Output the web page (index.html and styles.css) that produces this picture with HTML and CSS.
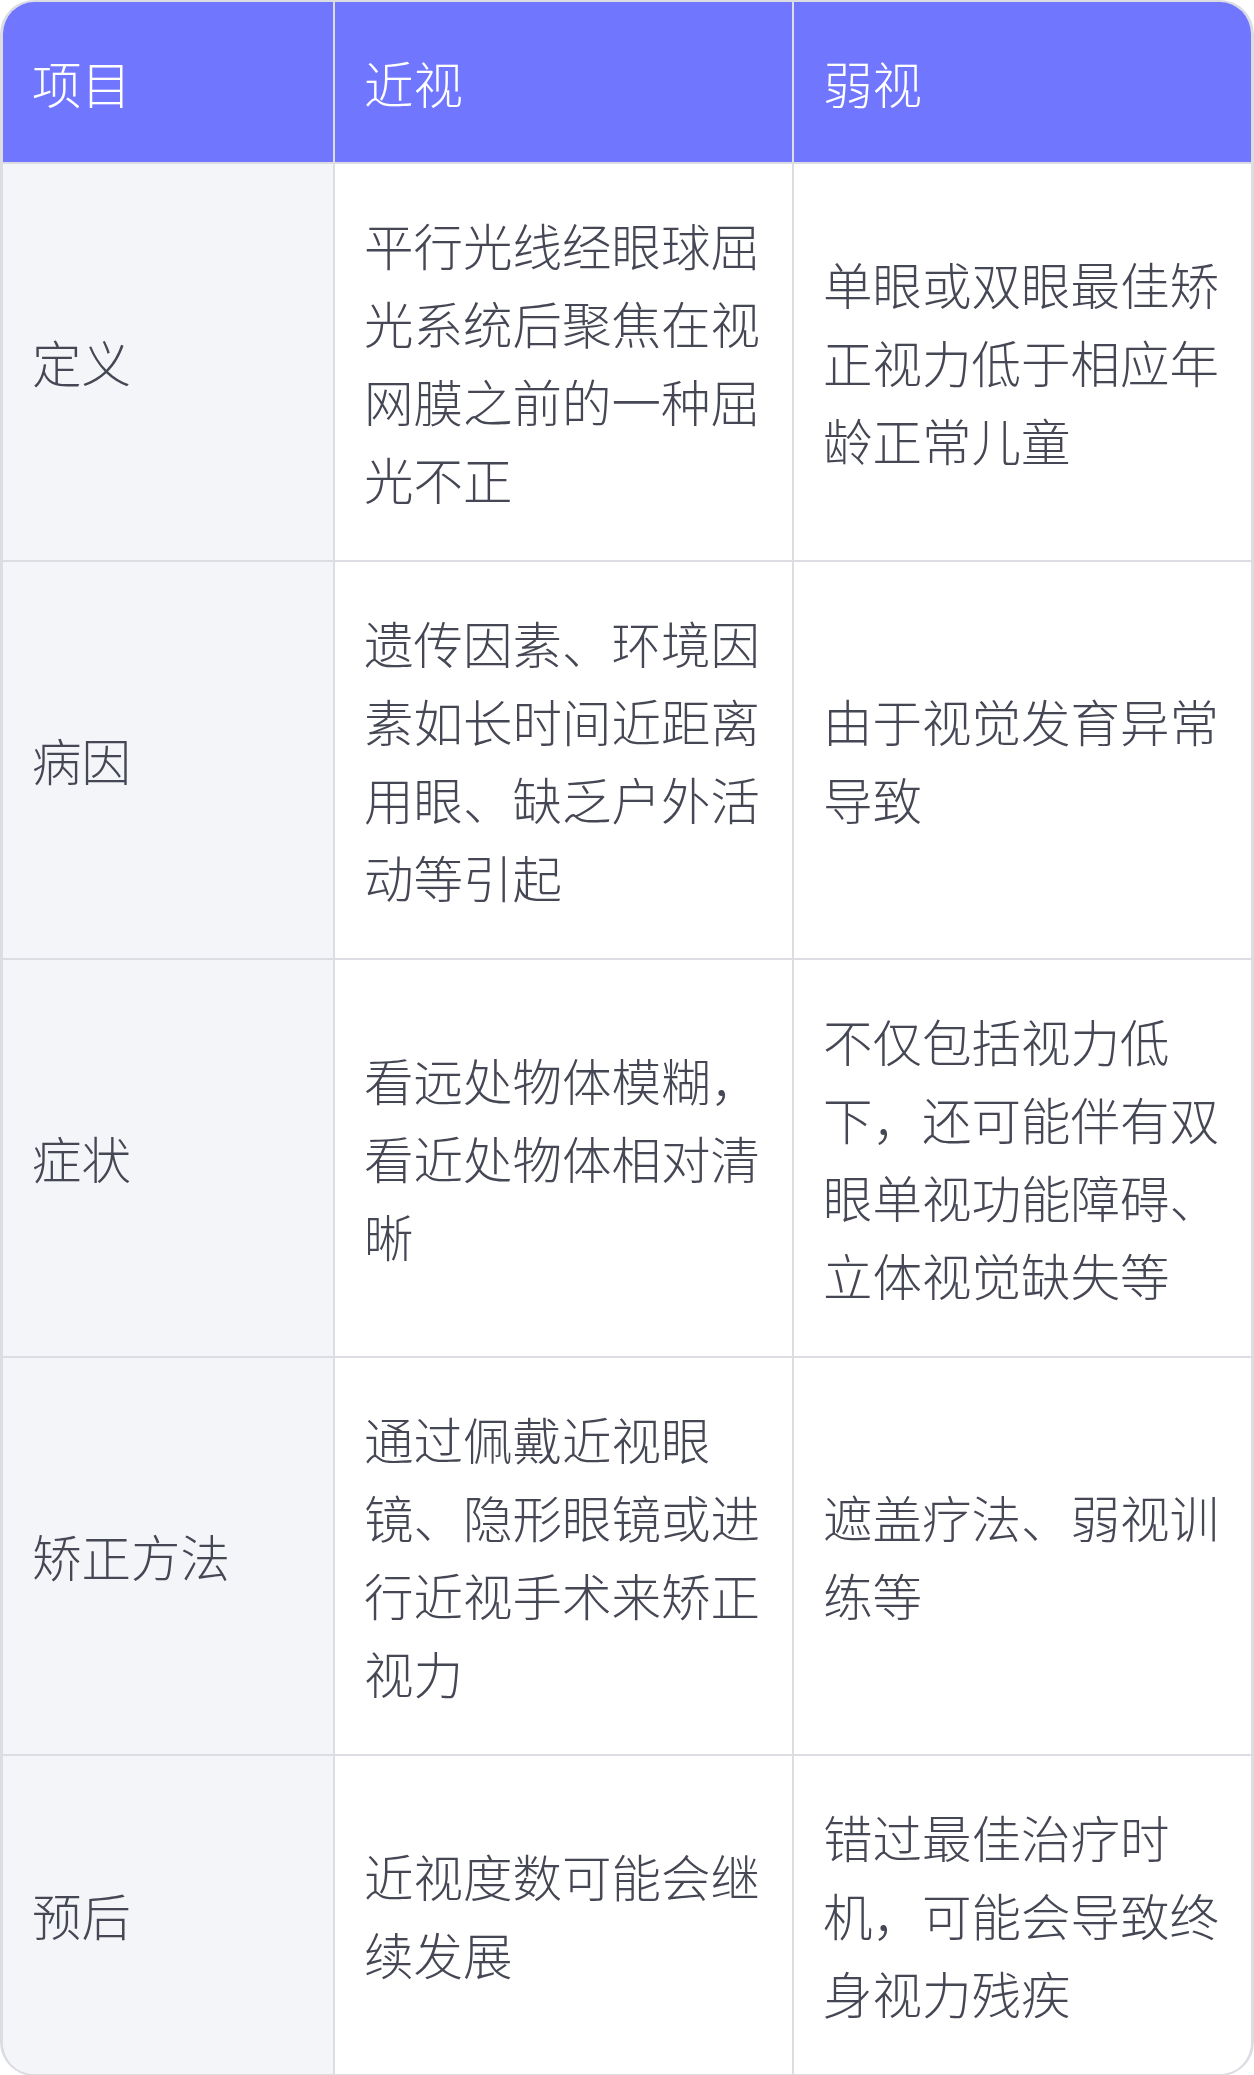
FILE: index.html
```html
<!DOCTYPE html>
<html lang="zh-CN">
<head>
<meta charset="utf-8">
<title>近视与弱视对比</title>
<link rel="stylesheet" href="styles.css">
</head>
<body>
<div class="table-wrap">
  <table class="compare">
    <colgroup>
      <col class="c1"><col class="c2"><col class="c3">
    </colgroup>
    <thead>
      <tr><th>项目</th><th>近视</th><th>弱视</th></tr>
    </thead>
    <tbody>
      <tr>
        <td class="label">定义</td>
        <td>平行光线经眼球屈光系统后聚焦在视网膜之前的一种屈光不正</td>
        <td>单眼或双眼最佳矫正视力低于相应年龄正常儿童</td>
      </tr>
      <tr>
        <td class="label">病因</td>
        <td>遗传因素、环境因素如长时间近距离用眼、缺乏户外活动等引起</td>
        <td>由于视觉发育异常导致</td>
      </tr>
      <tr>
        <td class="label">症状</td>
        <td>看远处物体模糊，看近处物体相对清晰</td>
        <td>不仅包括视力低下，还可能伴有双眼单视功能障碍、立体视觉缺失等</td>
      </tr>
      <tr>
        <td class="label">矫正方法</td>
        <td>通过佩戴近视眼镜、隐形眼镜或进行近视手术来矫正视力</td>
        <td>遮盖疗法、弱视训练等</td>
      </tr>
      <tr>
        <td class="label">预后</td>
        <td>近视度数可能会继续发展</td>
        <td>错过最佳治疗时机，可能会导致终身视力残疾</td>
      </tr>
    </tbody>
  </table>
</div>
</body>
</html>
```

FILE: styles.css
```css
html, body {
  margin: 0;
  padding: 0;
  background: #ffffff;
}

body {
  font-family: "Noto Sans CJK SC", "Noto Sans", sans-serif;
  color: #454754;
}

.table-wrap {
  width: 1254px;
  box-sizing: border-box;
  border: 2px solid #dcdde2;
  border-left-width: 3px;
  border-right-width: 3px;
  border-radius: 34px;
  overflow: hidden;
}

.compare {
  width: 100%;
  border-collapse: separate;
  border-spacing: 0;
  table-layout: fixed;
  font-size: 49.5px;
  font-weight: 300;
  line-height: 78px;
}

.c1 { width: 330px; }
.c2 { width: 459px; }
.c3 { width: auto; }

.compare th {
  background: #7176ff;
  color: #ffffff;
  font-weight: 300;
  text-align: left;
  padding: 42px 29px 40px 29px;
  border-bottom: 2px solid #dcdde2;
}

.compare td {
  padding: 42px 29px;
  vertical-align: middle;
  text-align: left;
  background: #ffffff;
  border-bottom: 2px solid #dcdde2;
}

.compare th + th,
.compare td + td {
  border-left: 2px solid #dcdde2;
}

.compare tbody tr:last-child td {
  border-bottom: none;
}

.compare td.label {
  background: #f4f5f9;
}
```
